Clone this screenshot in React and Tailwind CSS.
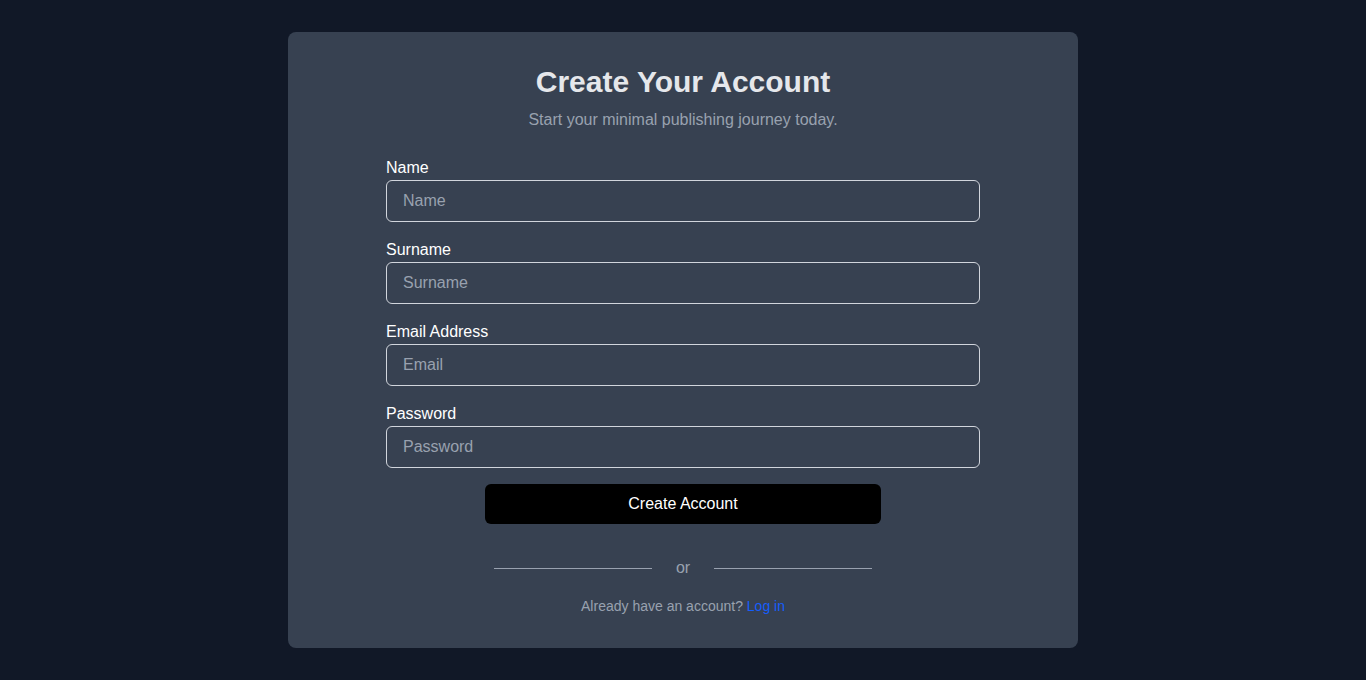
// App.jsx

function Field({ label, type, placeholder }) {
  return (
    <div className="mt-4 first:mt-0">
      <label className="block text-base leading-6 text-white">{label}</label>
      <input
        type={type}
        placeholder={placeholder}
        className="block w-full h-[42px] px-4 rounded-md border border-gray-300 bg-transparent text-base text-white placeholder:text-gray-400 outline-none"
      />
    </div>
  );
}

export default function App() {
  return (
    <div
      className="min-h-screen bg-[#111827] pt-8 flex justify-center"
      style={{ fontFamily: '"Liberation Sans", Arial, sans-serif' }}
    >
      <div className="w-[790px] h-[616px] bg-[#374151] rounded-lg px-8 pt-8 pb-8 flex flex-col items-center">
        <h1 className="text-3xl leading-9 font-bold text-gray-200">Create Your Account</h1>
        <p className="mt-2 text-base leading-6 text-gray-400">Start your minimal publishing journey today.</p>

        <form className="mt-6 w-[594px] flex flex-col">
          <Field label="Name" type="text" placeholder="Name" />
          <Field label="Surname" type="text" placeholder="Surname" />
          <Field label="Email Address" type="email" placeholder="Email" />
          <Field label="Password" type="password" placeholder="Password" />
          <button
            type="button"
            className="mt-4 self-center w-[396px] h-10 rounded-md bg-black text-white text-base"
          >
            Create Account
          </button>
        </form>

        {/* divider */}
        <div className="mt-8 w-[378px] flex items-center gap-6">
          <div className="flex-1 h-px bg-gray-400" />
          <span className="text-base leading-6 text-gray-400">or</span>
          <div className="flex-1 h-px bg-gray-400" />
        </div>

        <p className="mt-4 text-sm leading-5 text-gray-400">
          Already have an account? <a href="#" className="text-blue-600">Log in</a>
        </p>
      </div>
    </div>
  );
}
